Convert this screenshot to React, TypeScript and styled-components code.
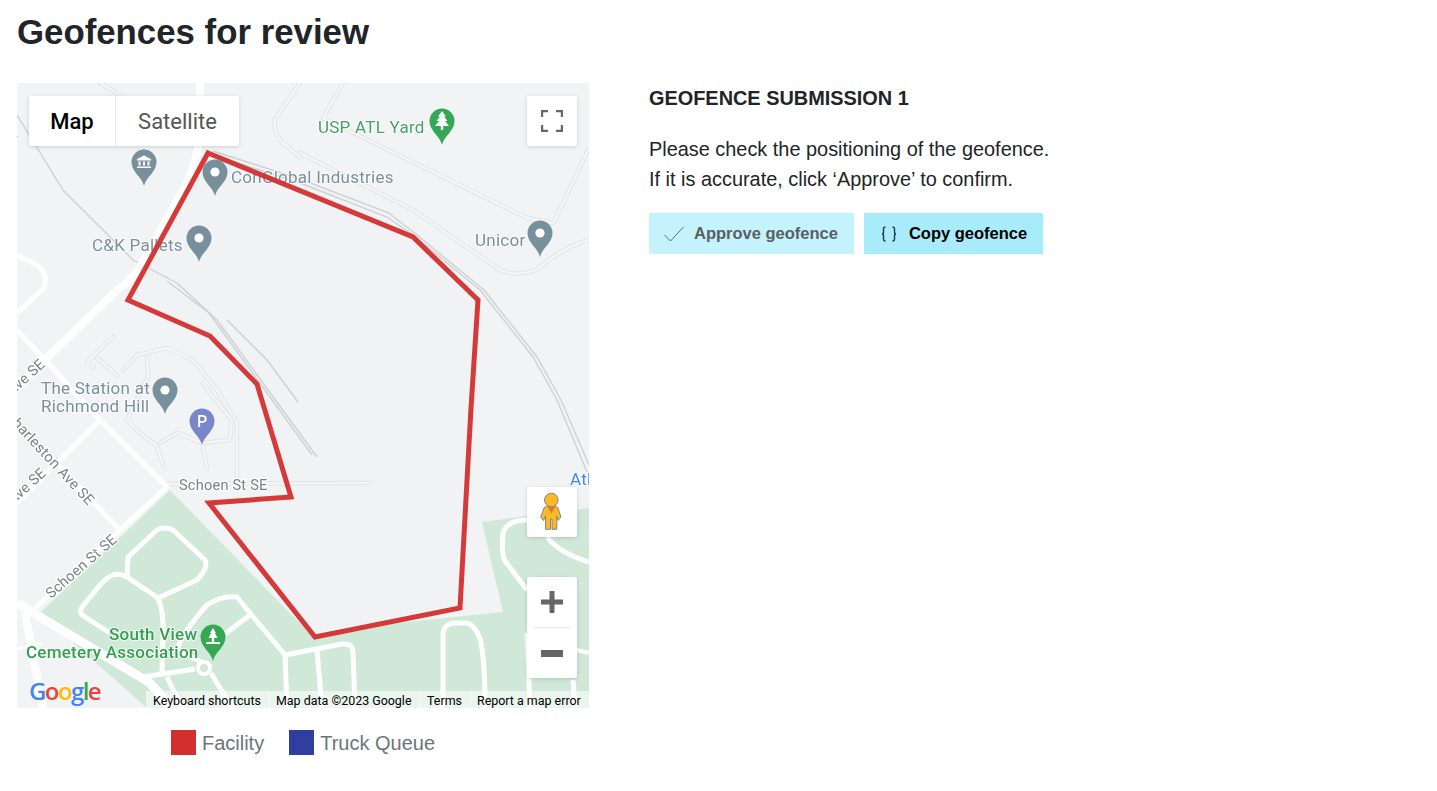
import React from 'react'
import styled, { createGlobalStyle } from 'styled-components'

const GlobalStyle = createGlobalStyle`
  html, body {
    margin: 0;
    padding: 0;
    background: #fff;
    font-family: "Liberation Sans", Arial, sans-serif;
    color: #212529;
  }
`

const whiteRoads: { d: string; w: number }[] = [
  { d: 'M183 0 L183 54 Q180 78 170 100 L123 184 Q112 200 100 207 L28 277 L0 305', w: 8 },
  { d: 'M0 247 L28 277 L83 337 L150 404 L18 525', w: 5 },
  { d: 'M0 340 L101 445', w: 5 },
  { d: 'M83 337 L0 420', w: 5 },
  { d: 'M0 520 L133 600 L155 625', w: 9 },
  { d: 'M8 530 L26 625', w: 8 },
  { d: 'M0 172 L20 182 Q30 190 28 198 Q28 204 25 207 L0 230', w: 5 },
  { d: 'M0 566 L25 560', w: 3 },
  { d: 'M110 494 L111 474 L140 447 Q148 443 156 447 L188 477 Q192 484 180 497 L141 515 L110 494 Q102 490 96 492 Q90 494 83 502 L65 524 Q62 528 65 532 L93 550', w: 5 },
  { d: 'M141 515 Q147 530 146 550 L145 590', w: 5 },
  { d: 'M126 594 L178 586', w: 5 },
  { d: 'M194 584 L160 567 Q165 550 190 522 Q205 512 220 514 L233 530 L268 572 L270 625', w: 5 },
  { d: 'M233 532 L196 560', w: 5 },
  { d: 'M268 572 L325 561 Q335 560 336 568 L338 625', w: 5 },
  { d: 'M300 567 L305 625', w: 5 },
  { d: 'M194 590 L212 620 L216 625', w: 5 },
  { d: 'M150 594 L165 625', w: 5 },
  { d: 'M426 625 L426 550 Q427 541 437 540 L450 540 Q458 542 463 556 Q468 575 468 625', w: 5 },
  { d: 'M510 507 L488 478 Q484 470 486 450 Q490 437 510 437', w: 5 },
  { d: 'M530 454 Q542 470 572 479', w: 5 },
  { d: 'M510 550 L513 625', w: 5 },
  { d: 'M556 597 L558 625', w: 5 },
  { d: 'M560 567 L572 570', w: 4 },
]

const paleRoads = [
  'M326 0 L306 35 L510 135 L536 140 Q540 132 546 120 L571 67',
  'M283 70 L396 127 L483 187 Q495 192 505 190 Q515 190 523 184 Q545 165 571 157',
  'M283 0 L258 37 Q256 50 266 60 L283 74',
  'M83 0 L105 13',
  'M150 401 L352 400',
  'M96 254 L70 279 L76 284 M80 275 L100 292',
  'M106 287 L120 272 L150 265 L176 277 L200 307 L220 340 L220 397',
  'M130 274 L131 294 L110 337 L123 350 L140 363 L147 385',
  'M185 360 L213 357 L215 337 L196 314 L186 300',
  'M143 360 L160 350 L185 360 L190 385',
]

const railLines = [
  'M0 32 L46 107 L83 144 L116 177 L160 200 L200 237 L300 374',
  'M150 198 L192 230 L295 372',
  'M210 237 L250 277 L281 319',
  'M196 72 L283 100 L370 134 L396 152 L463 207 L516 274 L540 317 L570 389',
  'M196 68 L283 96 L372 130 L400 152 L467 207 L520 274 L544 317 L572 382',
]

const geofence = '191,70 396,154 461,217 454,325 443,525 298,554 192,420 274,414 240,301 193,253 111,217'

const PIN = 'M0 24 C-2 15 -12.5 10 -12.5 0 A12.5 12.5 0 1 1 12.5 0 C12.5 10 2 15 0 24Z'

type PinSpec = { x: number; y: number; fill: string; glyph?: 'museum' | 'park' | 'tree' | 'parking' }

const pins: PinSpec[] = [
  { x: 127, y: 79, fill: '#78909c', glyph: 'museum' },
  { x: 198, y: 89, fill: '#78909c' },
  { x: 182, y: 155, fill: '#78909c' },
  { x: 148, y: 307, fill: '#78909c' },
  { x: 523, y: 150, fill: '#78909c' },
  { x: 185, y: 338, fill: '#7986cb', glyph: 'parking' },
  { x: 425, y: 38, fill: '#34a853', glyph: 'tree' },
  { x: 196, y: 554, fill: '#34a853', glyph: 'park' },
]

const MapPin: React.FC<PinSpec> = ({ x, y, fill, glyph }) => (
  <g transform={`translate(${x} ${y})`}>
    <path d={PIN} fill={fill} />
    {!glyph && <circle r="4.6" fill="#fff" />}
    {glyph === 'museum' && (
      <path d="M-7 -3 L0 -6.5 L7 -3 L7 -1.5 L-7 -1.5Z M-5.5 -.5 H-3.5 V3.5 H-5.5Z M-1 -.5 H1 V3.5 H-1Z M3.5 -.5 H5.5 V3.5 H3.5Z M-7 4.5 H7 V6 H-7Z" fill="#fff" />
    )}
    {glyph === 'tree' && (
      <path d="M0 -10 L4 -4.5 H2 L5.5 0 H3 L7 5 H1.2 V9 H-1.2 V5 H-7 L-3 0 H-5.5 L-2 -4.5 H-4Z" fill="#fff" />
    )}
    {glyph === 'park' && (
      <path d="M0 -9 L3 -4 H1.8 L4.5 1 H1.2 V5 H7 V7 H-7 V5 H-1.2 V1 H-4.5 L-1.8 -4 H-3Z" fill="#fff" />
    )}
    {glyph === 'parking' && (
      <text x="0" y="5.5" textAnchor="middle" fontFamily="Roboto, sans-serif" fontWeight="500" fontSize="16" fill="#fff">
        P
      </text>
    )}
  </g>
)

const Page = styled.div`
  padding: 12px 17px 0;
`

const Heading = styled.h1`
  margin: 0 0 31px;
  font-size: 34.8px;
  line-height: 40px;
  font-weight: 700;
  color: #212529;
`

const Layout = styled.div`
  display: flex;
  align-items: flex-start;
  gap: 60px;
`

const MapColumn = styled.div`
  width: 572px;
  flex: none;
`

const MapFrame = styled.div`
  position: relative;
  width: 572px;
  height: 625px;
  overflow: hidden;
  background: #f1f3f4;
  font-family: Roboto, sans-serif;
`

const MapCanvas = styled.svg`
  display: block;
  filter: blur(0.35px);
`

const PoiLabel = styled.text<{ $tone?: string }>`
  font-family: Roboto, sans-serif;
  font-size: 17px;
  letter-spacing: 0.25px;
  fill: ${p => p.$tone || '#7a8f9d'};
  stroke: #fff;
  stroke-opacity: 0.75;
  stroke-width: 2px;
  paint-order: stroke;
`

const GreenLabel = styled(PoiLabel)<{ $light?: boolean }>`
  font-weight: ${p => (p.$light ? 400 : 500)};
  fill: ${p => (p.$light ? '#4a9e68' : '#34a04f')};
`

const RoadLabel = styled.text`
  font-family: Roboto, sans-serif;
  font-size: 14.6px;
  letter-spacing: 0.2px;
  fill: #7c8186;
  stroke: #fff;
  stroke-width: 2.5px;
  paint-order: stroke;
`

const MapTypeControl = styled.div`
  position: absolute;
  top: 13px;
  left: 12px;
  display: flex;
  height: 50px;
  border-radius: 2px;
  overflow: hidden;
  background: #fff;
  box-shadow: 0 1px 4px rgba(0, 0, 0, 0.15);
`

const MapTypeButton = styled.div<{ $active?: boolean }>`
  box-sizing: border-box;
  display: flex;
  align-items: center;
  justify-content: center;
  width: ${p => (p.$active ? '86px' : '124px')};
  font-size: 22px;
  font-weight: ${p => (p.$active ? 500 : 400)};
  color: ${p => (p.$active ? '#000' : '#565656')};
  border-left: ${p => (p.$active ? 'none' : '1px solid #ebebeb')};
`

const ControlBox = styled.div<{ $top: number; $height?: number }>`
  position: absolute;
  top: ${p => p.$top}px;
  right: 12px;
  width: 50px;
  height: ${p => p.$height || 50}px;
  display: flex;
  flex-direction: column;
  align-items: center;
  justify-content: center;
  background: #fff;
  border-radius: 2px;
  box-shadow: 0 1px 4px rgba(0, 0, 0, 0.15);
`

const ZoomButton = styled.div`
  flex: 1;
  display: flex;
  align-items: center;
  justify-content: center;
`

const ZoomDivider = styled.div`
  width: 37px;
  height: 1px;
  background: #e6e6e6;
`

const GoogleLogo = styled.div`
  position: absolute;
  left: 12px;
  bottom: 3px;
  font-family: "Open Sans", sans-serif;
  font-size: 24px;
  line-height: 28px;
  letter-spacing: -1.6px;
  font-weight: 600;
  text-shadow: 0 0 2px #fff;
`

const Letter = styled.span<{ $color: string }>`
  color: ${p => p.$color};
`

const Attribution = styled.div`
  position: absolute;
  right: 0;
  bottom: 0;
  height: 17px;
  display: flex;
  background: rgba(255, 255, 255, 0.55);
  font-size: 12.45px;
  color: #000;
`

const AttributionItem = styled.span<{ $width: number }>`
  box-sizing: border-box;
  width: ${p => p.$width}px;
  height: 17px;
  line-height: 20px;
  padding-left: 6px;
  white-space: nowrap;
  border-left: 1px solid rgba(255, 255, 255, 0.7);

  &:first-child {
    border-left: none;
    padding-left: 7px;
  }
`

const Legend = styled.div`
  display: flex;
  justify-content: center;
  align-items: center;
  gap: 25px;
  margin-top: 22px;
  font-size: 20px;
  color: #6c757d;
`

const LegendItem = styled.div`
  display: flex;
  align-items: center;
  gap: 6px;
`

const LegendLabel = styled.span`
  padding-top: 2px;
`

const Swatch = styled.span<{ $color: string }>`
  width: 25px;
  height: 25px;
  background: ${p => p.$color};
`

const Details = styled.div`
  padding-top: 4px;
`

const SubmissionTitle = styled.h2`
  margin: 0 0 25px;
  font-size: 19.9px;
  line-height: 22px;
  font-weight: 700;
  color: #212529;
`

const Instructions = styled.p`
  margin: 0 0 19px;
  font-size: 19.9px;
  line-height: 30px;
  color: #212529;
`

const Actions = styled.div`
  display: flex;
  gap: 10px;
`

const ActionButton = styled.button<{ $muted?: boolean }>`
  display: flex;
  align-items: center;
  gap: ${p => (p.$muted ? '10px' : '12px')};
  height: 41px;
  padding: 0 16px 0 ${p => (p.$muted ? '15px' : '17px')};
  border: none;
  border-radius: 0;
  background: ${p => (p.$muted ? '#c5f3fd' : '#a8ecfb')};
  color: ${p => (p.$muted ? '#585f62' : '#000')};
  font-family: "Liberation Sans", Arial, sans-serif;
  font-size: 16.5px;
  font-weight: 700;
`

const App: React.FC = () => {
  return (
    <Page>
      <GlobalStyle />
      <Heading>Geofences for review</Heading>
      <Layout>
        <MapColumn>
          <MapFrame>
            <MapCanvas width="572" height="625" viewBox="0 0 572 625">
              <path d="M153 407 L298 556 L380 540 L486 529 L465 439 L572 425 V625 H130 L23 530Z" fill="#cfe8d8" />
              {paleRoads.map(d => (
                <g key={d} fill="none" strokeLinejoin="round" strokeLinecap="round">
                  <path d={d} stroke="#e2e4e6" strokeWidth="4.5" />
                  <path d={d} stroke="#f4f5f6" strokeWidth="2.5" />
                </g>
              ))}
              {railLines.map(d => (
                <path key={d} d={d} fill="none" stroke="#cdd1d4" strokeWidth="1.4" />
              ))}
              {whiteRoads.map(r => (
                <path key={r.d} d={r.d} fill="none" stroke="#fff" strokeWidth={r.w} strokeLinejoin="round" />
              ))}
              <circle cx="187" cy="585" r="6" fill="#cfe8d8" stroke="#fff" strokeWidth="4" />

              {pins.map(p => (
                <MapPin key={`${p.x}-${p.y}`} {...p} />
              ))}

              <PoiLabel x="-15" y="62">or</PoiLabel>
              <PoiLabel x="214" y="100">ConGlobal Industries</PoiLabel>
              <PoiLabel x="75" y="168">C&amp;K Pallets</PoiLabel>
              <PoiLabel x="458" y="163">Unicor</PoiLabel>
              <PoiLabel x="24" y="311">The Station at</PoiLabel>
              <PoiLabel x="24" y="329">Richmond Hill</PoiLabel>
              <GreenLabel x="301" y="50" $light>USP ATL Yard</GreenLabel>
              <GreenLabel x="92" y="557">South View</GreenLabel>
              <GreenLabel x="9" y="575">Cemetery Association</GreenLabel>
              <PoiLabel x="553" y="402" $tone="#4285f4">Atl</PoiLabel>

              <RoadLabel x="162" y="407">Schoen St SE</RoadLabel>
              <RoadLabel transform="translate(34 516) rotate(-41)">Schoen St SE</RoadLabel>
              <RoadLabel transform="translate(-12 334) rotate(47)">Charleston Ave SE</RoadLabel>
              <RoadLabel transform="translate(-5 313) rotate(-42)">Ave SE</RoadLabel>
              <RoadLabel transform="translate(-4 422) rotate(-42)">Ave SE</RoadLabel>

              <polygon points={geofence} fill="#80868b" fillOpacity="0.01" stroke="#d32f2f" strokeWidth="5" strokeOpacity="0.95" />
            </MapCanvas>

            <MapTypeControl>
              <MapTypeButton $active>Map</MapTypeButton>
              <MapTypeButton>Satellite</MapTypeButton>
            </MapTypeControl>

            <ControlBox $top={13}>
              <svg width="22" height="22" viewBox="0 0 22 22" fill="none" stroke="#666" strokeWidth="2.2">
                <path d="M1.1 7 V1.1 H7 M15 1.1 H20.9 V7 M20.9 15 V20.9 H15 M7 20.9 H1.1 V15" />
              </svg>
            </ControlBox>

            <ControlBox $top={404}>
              <svg width="50" height="50" viewBox="0 0 50 50">
                <path
                  d="M19 19.5 Q21 18.5 24 18.5 Q27 18.5 29 19.5 L31 21 L34 30 L31 33.5 L29.8 29 V42.3 H25 V32 H23.5 V42.3 H18.5 V29 L16.5 33.5 L13.7 30 L17 21Z"
                  fill="#fdb827"
                  stroke="#7d7d7d"
                  strokeWidth="0.9"
                />
                <path d="M20.5 19.5 H28.5 L24.5 26.5Z" fill="#e07b26" />
                <circle cx="24.3" cy="13" r="6.8" fill="#fdb827" stroke="#7d7d7d" strokeWidth="0.9" />
              </svg>
            </ControlBox>

            <ControlBox $top={494} $height={101}>
              <ZoomButton>
                <svg width="22" height="22" viewBox="0 0 22 22" fill="#666">
                  <path d="M8.5 0 H13.5 V8.5 H22 V13.5 H13.5 V22 H8.5 V13.5 H0 V8.5 H8.5Z" />
                </svg>
              </ZoomButton>
              <ZoomDivider />
              <ZoomButton>
                <svg width="22" height="7" viewBox="0 0 22 7" fill="#666">
                  <rect width="22" height="7" />
                </svg>
              </ZoomButton>
            </ControlBox>

            <GoogleLogo>
              <Letter $color="#4285f4">G</Letter>
              <Letter $color="#ea4335">o</Letter>
              <Letter $color="#fbbc05">o</Letter>
              <Letter $color="#4285f4">g</Letter>
              <Letter $color="#34a853">l</Letter>
              <Letter $color="#ea4335">e</Letter>
            </GoogleLogo>

            <Attribution>
              <AttributionItem $width={123}>Keyboard shortcuts</AttributionItem>
              <AttributionItem $width={151}>Map data ©2023 Google</AttributionItem>
              <AttributionItem $width={50}>Terms</AttributionItem>
              <AttributionItem $width={119}>Report a map error</AttributionItem>
            </Attribution>
          </MapFrame>

          <Legend>
            <LegendItem>
              <Swatch $color="#d32f2f" />
              <LegendLabel>Facility</LegendLabel>
            </LegendItem>
            <LegendItem>
              <Swatch $color="#303f9f" />
              <LegendLabel>Truck Queue</LegendLabel>
            </LegendItem>
          </Legend>
        </MapColumn>

        <Details>
          <SubmissionTitle>GEOFENCE SUBMISSION 1</SubmissionTitle>
          <Instructions>
            Please check the positioning of the geofence.
            <br />
            If it is accurate, click ‘Approve’ to confirm.
          </Instructions>
          <Actions>
            <ActionButton $muted>
              <svg width="20" height="16" viewBox="0 0 20 16" fill="none" stroke="#5f6b6e" strokeWidth="1">
                <path d="M0.5 9 L6.5 15 L19.5 1" />
              </svg>
              Approve geofence
            </ActionButton>
            <ActionButton>
              <svg width="16" height="16" viewBox="0 0 16 16" fill="none" stroke="#1d3b44" strokeWidth="1.4">
                <path d="M4.5 1 Q2.5 1 2.5 3 V6 Q2.5 8 1 8 Q2.5 8 2.5 10 V13 Q2.5 15 4.5 15" />
                <path d="M11.5 1 Q13.5 1 13.5 3 V6 Q13.5 8 15 8 Q13.5 8 13.5 10 V13 Q13.5 15 11.5 15" />
              </svg>
              Copy geofence
            </ActionButton>
          </Actions>
        </Details>
      </Layout>
    </Page>
  )
}

export default App
